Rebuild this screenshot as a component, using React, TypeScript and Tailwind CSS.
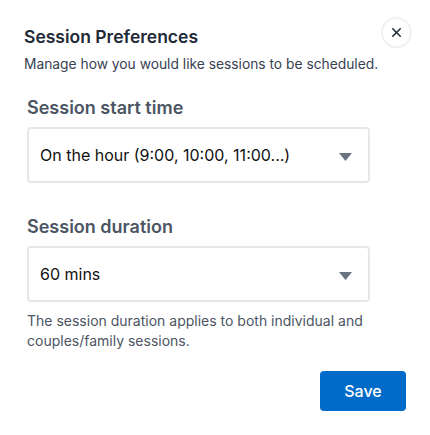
import { X } from 'lucide-react';

function Select({ value }: { value: string }) {
    return (
        <div className="flex h-[56px] w-[343px] items-center justify-between rounded-[4px] border-2 border-[#e5e7eb] bg-white pl-[11px] pr-[14px]">
            <span className="text-[16px] text-[#111]">{value}</span>
            <svg width="13" height="8" viewBox="0 0 13 8" className="mr-[2px] mt-[4px]">
                <path d="M0 0 H13 L6.5 8 Z" fill="#6b7280" />
            </svg>
        </div>
    );
}

export default function App() {
    return (
        <div className="min-h-[435px] w-[430px] bg-white px-[24px] pt-[17px] font-['Inter',sans-serif]">
            <div className="flex items-start justify-between">
                <h2 className="pt-[7px] text-[17.5px] font-semibold leading-[26px] text-[#1f2937]">Session Preferences</h2>
                <button className="-mr-[6px] flex h-[31px] w-[31px] items-center justify-center rounded-full border-2 border-[#f0f1f3] text-[#1f2937]">
                    <X size={15} strokeWidth={2.4} />
                </button>
            </div>
            <p className="mt-[4px] text-[13.8px] leading-[21px] text-[#374151]">Manage how you would like sessions to be scheduled.</p>

            <div className="ml-[3px] mt-[19px]">
                <h3 className="mb-[6px] text-[18px] font-semibold leading-[27px] text-[#4b5563]">Session start time</h3>
                <Select value="On the hour (9:00, 10:00, 11:00...)" />

                <h3 className="mb-[6px] mt-[30px] text-[18px] font-semibold leading-[27px] text-[#4b5563]">Session duration</h3>
                <Select value="60 mins" />

                <p className="mt-[9px] text-[14px] leading-[20px] text-[#4b5563]">
                    The session duration applies to both individual and
                    <br />
                    couples/family sessions.
                </p>
            </div>

            <div className="mt-[20px] flex justify-end">
                <button className="h-[40px] w-[86px] rounded-[4px] bg-[#006bc8] text-[16px] font-medium text-white">
                    Save
                </button>
            </div>
        </div>
    );
}
